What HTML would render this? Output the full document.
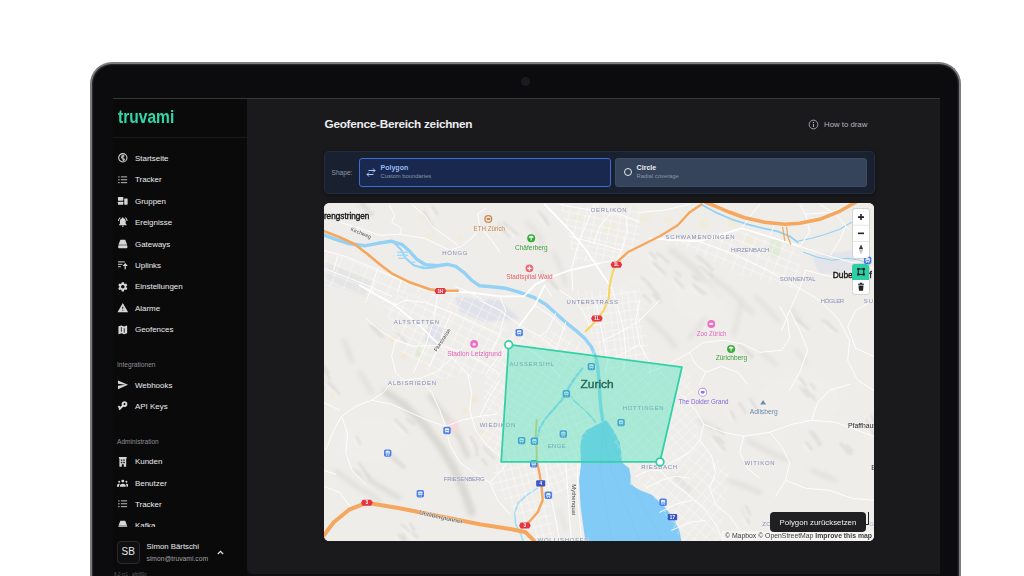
<!DOCTYPE html>
<html lang="de">
<head>
<meta charset="utf-8">
<title>Geofence-Bereich zeichnen</title>
<style>
*{box-sizing:border-box;margin:0;padding:0}
html,body{width:1024px;height:576px;overflow:hidden;background:#fff;font-family:"Liberation Sans",sans-serif;}
#laptop{position:absolute;left:90px;top:62px;width:871px;height:560px;border-radius:22px 22px 0 0;background:#0c0c0e;border:2px solid #7c7c80;border-bottom:none;box-shadow:inset 0 0 1.500px 1px #303033;}
#cam{position:absolute;left:521px;top:77px;width:9px;height:9px;border-radius:50%;background:#1b1b1f;}
#screen{position:absolute;left:113px;top:98px;width:827px;height:478px;background:#0e0e10;overflow:hidden;}
#side{position:absolute;left:0;top:0;width:134px;height:478px;background:#0a0a0b;}
#main{position:absolute;left:134px;top:0;width:693px;height:475.700px;background:#1a1a1d;border-radius:0 0 0 6px;}
.logo{position:absolute;left:4.5px;top:8.500px;font-weight:bold;font-size:17.600px;color:#2fd8a8;line-height:20px;transform:scaleX(.885);transform-origin:0 0;}
.sep{position:absolute;left:0;top:38.5px;width:134px;height:1px;background:#1a1a1c;}
.it{position:absolute;left:22px;font-size:7.950px;color:#ececee;white-space:nowrap;line-height:10px;height:10px;}
.ic{position:absolute;left:3.700px;width:11.600px;height:11.600px;fill:#d6d6d9;margin-top:-.800px}
.hd{position:absolute;left:4px;font-size:6.6px;color:#8e8e93;line-height:9px;height:9px;white-space:nowrap;}
.user{position:absolute;left:0;top:429.400px;width:134px;height:48.600px;background:#0a0a0b;}
.av{position:absolute;left:4px;top:13.900px;width:22.5px;height:22.5px;border-radius:4px;border:1px solid #2a2a2d;background:#101012;color:#e8e8ea;font-size:10px;line-height:20.500px;text-align:center;}
.un{position:absolute;left:33.500px;top:14.800px;font-size:7.8px;color:#ececee;line-height:10px;white-space:nowrap;}
.um{position:absolute;left:33.500px;top:26.600px;font-size:6.75px;color:#a0a0a6;line-height:9px;white-space:nowrap;}
.ver{position:absolute;left:1px;top:474px;font-size:4.5px;color:#56565b;line-height:5px;white-space:nowrap;}
h1{position:absolute;left:77.5px;top:18px;font-size:11.8px;letter-spacing:-.28px;font-weight:bold;color:#ededf0;line-height:16px;white-space:nowrap;}
.how{position:absolute;left:561px;top:20px;font-size:7.8px;color:#b4b4bb;line-height:10px;white-space:nowrap;}
.shape{position:absolute;left:77.300px;top:53px;width:550.500px;height:42.800px;border-radius:5px;background:#192030;border:1px solid #232d40;box-shadow:0 2px 5px rgba(0,0,0,.28);}
.shl{position:absolute;left:6.2px;top:15.7px;font-size:6.6px;color:#8f98a8;line-height:9px;}
.bt{position:absolute;top:6.200px;height:28.800px;border-radius:3px;}
.bt b{position:absolute;left:20.500px;top:3.600px;font-size:7.050px;line-height:9px;white-space:nowrap;}
.bt span{position:absolute;left:20.500px;top:13.300px;font-size:5.850px;line-height:8px;color:#8a94a8;white-space:nowrap;}
#bp{left:33.7px;width:252px;background:#19284f;border:1px solid #3b6fd4;}
#bp b{color:#93bdf5;}
#bc{left:289.800px;width:251.500px;background:#35445a;border:1px solid #3e4d64;}
#bc b{color:#e9edf3;}
#map{position:absolute;left:77.300px;top:104.700px;width:550.200px;height:338.600px;border-radius:5.500px;overflow:hidden;background:#efedea;}
#map svg{position:absolute;left:0;top:0;}
.ctl{position:absolute;left:528.600px;width:16px;background:#fff;border-radius:2.5px;box-shadow:0 0 0 1px rgba(0,0,0,.1);}
.tip{position:absolute;left:446px;top:309.500px;width:95.3px;height:19.700px;border-radius:4px;background:#202023;color:#f2f2f4;font-size:7.850px;line-height:21.500px;text-align:center;white-space:nowrap;z-index:3;}
.attr{position:absolute;right:0;bottom:0;height:10px;padding:0 2.500px 0 3px;background:rgba(255,255,255,.45);font-size:6.850px;line-height:10.200px;color:#3c3c3c;white-space:nowrap;}
</style>
</head>
<body>
<div id="laptop"></div>
<div id="cam"></div>
<div id="screen">
<div class="topline" style="position:absolute;left:0;top:0;width:827px;height:1px;background:#38383b;z-index:5"></div>
<div id="side">
<div class="logo">truvami</div>
<div class="sep"></div>
<svg class="ic" style="top:55.0px" viewBox="0 0 24 24"><circle cx="12" cy="12" r="8.600" fill="none" stroke="#d6d6d9" stroke-width="2.200"/><path d="M9.500 6.500l4.500-1 2 3.500-3 1.500 1 3 3 .5-1.500 4-3.500 1-1-4.500-3-2.500z" opacity=".85"/></svg>
<div class="it" style="top:55.9px">Startseite</div>
<svg class="ic" style="top:76.4px" viewBox="0 0 24 24"><circle cx="4" cy="6" r="1.400"/><circle cx="4" cy="12" r="1.400"/><circle cx="4" cy="18" r="1.400"/><rect x="8" y="5.100" width="13" height="1.800"/><rect x="8" y="11.100" width="13" height="1.800"/><rect x="8" y="17.100" width="13" height="1.800"/></svg>
<div class="it" style="top:77.3px">Tracker</div>
<svg class="ic" style="top:97.8px" viewBox="0 0 24 24"><rect x="2" y="4" width="11" height="8" rx="1"/><rect x="2" y="14" width="11" height="6" rx="1"/><rect x="15" y="7" width="7" height="13" rx="1"/></svg>
<div class="it" style="top:98.7px">Gruppen</div>
<svg class="ic" style="top:119.2px" viewBox="0 0 24 24"><path d="M12 2.500c-.83 0-1.500.67-1.500 1.500v.68C7.630 5.360 6 7.920 6 11v5l-2 2v1h16v-1l-2-2v-5c0-3.070-1.640-5.640-4.500-6.320V4c0-.83-.67-1.500-1.500-1.500zM10 20c0 1.100.9 2 2 2s2-.9 2-2h-4zM7.580 4.080L6.150 2.650C3.750 4.480 2.170 7.300 2.030 10.500h2c.15-2.650 1.510-4.970 3.550-6.420zM19.970 10.500h2c-.15-3.200-1.730-6.020-4.120-7.850l-1.420 1.430c2.020 1.450 3.390 3.770 3.540 6.420z"/></svg>
<div class="it" style="top:120.1px">Ereignisse</div>
<svg class="ic" style="top:140.6px" viewBox="0 0 24 24"><path d="M7 3.500h10l4 10.500H3z"/><rect x="2.500" y="15.200" width="19" height="5.800" rx="1.400"/></svg>
<div class="it" style="top:141.5px">Gateways</div>
<svg class="ic" style="top:162.0px" viewBox="0 0 24 24"><rect x="2" y="5" width="14" height="2"/><rect x="2" y="10" width="9" height="2"/><rect x="2" y="15" width="6" height="2"/><path d="M17 8.500l5.500 5.800h-4.200v6.700h-2.600v-6.700h-4.200z"/></svg>
<div class="it" style="top:162.9px">Uplinks</div>
<svg class="ic" style="top:183.4px" viewBox="0 0 24 24"><path d="M19.140 12.940c.04-.3.060-.61.060-.940 0-.32-.020-.64-.070-.940l2.030-1.580c.18-.14.230-.41.120-.61l-1.920-3.320c-.12-.22-.37-.29-.59-.22l-2.390.96c-.5-.38-1.030-.7-1.620-.94l-.36-2.540c-.04-.24-.24-.41-.48-.41h-3.840c-.24 0-.43.170-.47.410l-.36 2.540c-.59.240-1.130.57-1.620.94l-2.390-.96c-.22-.08-.47 0-.59.220L2.740 8.870c-.12.210-.08.470.12.610l2.030 1.580c-.05.300-.09.630-.09.940s.02.640.07.940l-2.030 1.580c-.18.140-.23.410-.12.610l1.920 3.320c.12.220.37.290.59.220l2.390-.96c.5.380 1.030.7 1.620.94l.36 2.540c.05.240.24.410.48.410h3.840c.24 0 .44-.17.470-.41l.36-2.540c.59-.24 1.130-.56 1.620-.94l2.390.96c.22.080.47 0 .59-.22l1.920-3.320c.12-.22.070-.47-.12-.61l-2.010-1.580zM12 15.600c-1.980 0-3.600-1.620-3.600-3.600s1.620-3.600 3.600-3.600 3.600 1.620 3.600 3.600-1.620 3.600-3.600 3.600z"/></svg>
<div class="it" style="top:184.3px">Einstellungen</div>
<svg class="ic" style="top:204.8px" viewBox="0 0 24 24"><path fill-rule="evenodd" d="M1 21h22L12 2 1 21zm12-3h-2v-2h2v2zm0-4h-2v-4h2v4z"/></svg>
<div class="it" style="top:205.7px">Alarme</div>
<svg class="ic" style="top:226.3px" viewBox="0 0 24 24"><path d="M20.500 3l-.16.030L15 5.100 9 3 3.360 4.900c-.21.070-.36.250-.36.480V20.500c0 .28.220.5.500.5l.16-.03L9 18.900l6 2.100 5.640-1.900c.21-.07.360-.25.360-.48V3.500c0-.28-.22-.5-.5-.5z"/><path d="M9 6.500v9.500M15 8.500v9.500" stroke="#0a0a0b" stroke-width="1.600" fill="none"/></svg>
<div class="it" style="top:227.2px">Geofences</div>
<svg class="ic" style="top:281.7px" viewBox="0 0 24 24"><path d="M2.010 21L23 12 2.010 3 2 10l15 2-15 2z"/></svg>
<div class="it" style="top:282.6px">Webhooks</div>
<svg class="ic" style="top:303.0px" viewBox="0 0 24 24"><g transform="rotate(135 12 12)"><path fill-rule="evenodd" d="M12.650 10C11.830 7.670 9.610 6 7 6c-3.310 0-6 2.690-6 6s2.690 6 6 6c2.610 0 4.830-1.670 5.650-4H17v4h4v-4h2v-4H12.650zM7 14c-1.100 0-2-.9-2-2s.9-2 2-2 2 .9 2 2-.9 2-2 2z"/></g></svg>
<div class="it" style="top:303.9px">API Keys</div>
<svg class="ic" style="top:358.4px" viewBox="0 0 24 24"><path fill-rule="evenodd" d="M4 2h16v3h-1v17h-5v-5h-4v5H5V5H4zM8 7v3h3V7zm5 0v3h3V7zM8 12v3h3v-3zm5 0v3h3v-3z"/></svg>
<div class="it" style="top:359.3px">Kunden</div>
<svg class="ic" style="top:379.8px" viewBox="0 0 24 24"><circle cx="12" cy="8.500" r="3"/><path d="M6 18.500c0-3 3-4.500 6-4.500s6 1.500 6 4.500V20H6z"/><circle cx="4.500" cy="10" r="2"/><circle cx="19.500" cy="10" r="2"/><path d="M0 18c0-2.500 2-3.800 4.500-3.800.5 0 1 .05 1.400.15C4.700 15.400 4.200 16.800 4.200 18.500V20H0zM24 18c0-2.500-2-3.800-4.500-3.800-.5 0-1 .05-1.400.15 1.200 1.050 1.700 2.450 1.700 4.150V20H24z"/></svg>
<div class="it" style="top:380.7px">Benutzer</div>
<svg class="ic" style="top:401.2px" viewBox="0 0 24 24"><circle cx="4" cy="6" r="1.400"/><circle cx="4" cy="12" r="1.400"/><circle cx="4" cy="18" r="1.400"/><rect x="8" y="5.100" width="13" height="1.800"/><rect x="8" y="11.100" width="13" height="1.800"/><rect x="8" y="17.100" width="13" height="1.800"/></svg>
<div class="it" style="top:402.1px">Tracker</div>
<svg class="ic" style="top:422.2px" viewBox="0 0 24 24"><path d="M7 3.500h10l4 10.500H3z"/><rect x="2.500" y="15.200" width="19" height="5.800" rx="1.400"/></svg>
<div class="it" style="top:423.1px">Kafka</div>
<div class="hd" style="top:261.9px">Integrationen</div>
<div class="hd" style="top:338.5px">Administration</div>
<div class="user"><div class="av">SB</div><div class="un">Simon Bärtschi</div><div class="um">simon@truvami.com</div>
<svg style="position:absolute;left:103px;top:20.600px;width:9px;height:9px" viewBox="0 0 24 24"><path d="M5 16l7-7 7 7" fill="none" stroke="#e4e4e6" stroke-width="3.200"/></svg></div>
<div class="ver">8.2-rc1 · afbf89c</div>
</div>
<div id="main">
 <h1>Geofence-Bereich zeichnen</h1>
 <svg style="position:absolute;left:560.5px;top:20.500px;width:11px;height:11px" viewBox="0 0 24 24"><circle cx="12" cy="12" r="9.500" fill="none" stroke="#b4b4bb" stroke-width="1.800"/><rect x="11" y="10.500" width="2" height="7" fill="#b4b4bb"/><circle cx="12" cy="7.500" r="1.300" fill="#b4b4bb"/></svg>
 <div class="how" style="left:577px;top:21.600px">How to draw</div>
 <div class="shape">
  <div class="shl">Shape:</div>
  <div class="bt" id="bp">
   <svg style="position:absolute;left:6.500px;top:7.500px;width:10px;height:11px" viewBox="0 0 20 22"><path d="M5 7h13M14 3l4 4-4 4M15 15H2M6 11l-4 4 4 4" fill="none" stroke="#a9c8f5" stroke-width="2"/></svg>
   <b>Polygon</b><span>Custom boundaries</span>
  </div>
  <div class="bt" id="bc">
   <svg style="position:absolute;left:6.500px;top:8.300px;width:10px;height:10px" viewBox="0 0 20 20"><circle cx="10" cy="10" r="7" fill="none" stroke="#e4e8ee" stroke-width="2"/></svg>
   <b>Circle</b><span>Radial coverage</span>
  </div>
 </div>
 <div id="map">
<svg width="550.200" height="338.600" viewBox="324.300 202.700 550.200 338.600" font-family="Liberation Sans, sans-serif">
<defs>
 <filter id="bl" x="-20%" y="-20%" width="140%" height="140%"><feGaussianBlur stdDeviation="2.200"/></filter>
 <filter id="bl2" x="-20%" y="-20%" width="140%" height="140%"><feGaussianBlur stdDeviation="1.200"/></filter>
 </defs>
<rect x="323" y="202" width="553" height="342" fill="#efedea"/>
<!-- hillshade -->
<g filter="url(#bl)" fill="none" stroke="#d2d0ca" stroke-linecap="round" opacity=".42">
 <path d="M344 340 L352 360 M360 372 L372 392 M336 470 L356 486 L380 500" stroke-width="5"/>
 <path d="M672 250 L690 264 L706 282 L720 296" stroke-width="6"/>
 <path d="M700 268 L730 290 L752 312" stroke-width="5"/>
 <path d="M742 298 L738 320 L734 334" stroke-width="4"/>
 <path d="M756 296 L772 312 L780 322" stroke-width="4"/>
 <path d="M792 308 L800 322 M762 352 L776 364 M796 350 L806 362" stroke-width="4"/>
 <path d="M648 318 L664 332 L676 346" stroke-width="5"/>
 <path d="M690 338 L700 326 L706 316" stroke-width="4"/>
 <path d="M528 222 L540 236 L546 252 M554 252 L562 270 L566 284" stroke-width="4"/>
 <path d="M700 420 L720 432 M748 440 L770 452 L788 460 M812 470 L836 480 M730 480 L760 492 M676 476 L690 490" stroke-width="5"/>
 <path d="M560 510 L566 530" stroke-width="3"/>
</g>
<g filter="url(#bl)" fill="#f1f0ed" opacity=".6">
 <ellipse cx="372" cy="440" rx="30" ry="22"/><ellipse cx="700" cy="300" rx="26" ry="18"/><ellipse cx="800" cy="400" rx="40" ry="24"/><ellipse cx="640" cy="290" rx="20" ry="14"/>
</g>
<g filter="url(#bl)" fill="none" stroke="#d3d1ca" stroke-linecap="round" opacity=".75"><path d="M386 392 L404 404 L424 424 L442 448 L454 468 L464 490 L472 512" stroke-width="8"/><path d="M430 396 L446 416 L460 438 L468 456" stroke-width="5"/><path d="M356 470 L380 486 L400 498" stroke-width="4"/></g>
<!-- fine hillshade -->
<g filter="url(#bl2)" fill="none" stroke-linecap="round"><path stroke="#d4d2cc" stroke-width="2.800" opacity=".5" d="M731.4 411.0 L734.9 418.6 M739.6 403.1 L746.2 412.4 M750.6 398.8 L757.4 410.0 M810.7 431.3 L820.1 445.0 M806.6 442.6 L812.0 448.9 M812.3 432.0 L820.8 443.0 M813.9 432.4 L818.7 440.0 M676.2 271.4 L680.7 275.4 M641.9 277.2 L650.2 284.0 M823.2 320.5 L837.0 330.6 M826.6 321.2 L835.0 329.6 M796.9 318.8 L808.4 328.7 M867.3 419.9 L874.3 434.6 M872.1 416.0 L875.8 424.3 M705.1 262.2 L712.6 269.4 M695.4 257.4 L701.3 262.3 M703.1 266.6 L712.4 276.2 M698.1 255.7 L708.9 264.9 M657.8 253.3 L669.1 262.3 M650.8 252.8 L656.5 258.6 M653.8 262.3 L665.5 273.6 M660.1 254.7 L665.0 258.6 M654.6 293.8 L659.8 299.5 M647.7 282.1 L658.9 295.3 M644.0 295.0 L651.4 301.4 M652.9 295.1 L660.1 301.6 M739.3 344.7 L753.1 355.6 M738.3 348.3 L749.1 360.4 M739.9 349.5 L750.7 358.3 M746.3 353.0 L752.2 357.4 M811.2 383.9 L815.2 388.9 M800.8 386.5 L808.2 396.0 M800.2 377.7 L806.0 385.4 M805.9 388.5 L815.0 399.1 M717.5 428.3 L723.9 433.7 M718.2 437.3 L723.9 442.4 M713.5 436.0 L725.1 449.5 M742.9 508.8 L747.2 517.6 M746.7 517.0 L749.5 522.7 M746.2 505.9 L750.6 514.5 M693.8 284.7 L702.8 293.2 M693.6 284.1 L706.2 293.7 M693.5 276.1 L698.6 280.0 M675.4 278.0 L683.3 287.0 M847.0 444.9 L852.4 450.2 M841.2 443.5 L849.2 453.5 M841.5 445.0 L852.1 453.9 M482.6 458.8 L486.9 464.4 M484.5 446.9 L494.3 457.8 M323.8 377.3 L335.4 387.9 M328.6 382.7 L339.8 393.4 M315.2 374.9 L325.0 387.6 M406.4 526.6 L418.1 537.5 M402.1 524.2 L408.6 530.6 M375.6 327.0 L383.3 336.8 M398.0 332.5 L405.8 341.9 M371.1 325.8 L381.2 335.9 M403.3 534.1 L407.3 543.4 M410.7 523.4 L414.5 529.6 M399.1 534.4 L409.7 548.5 M319.2 360.6 L328.7 371.9 M322.7 368.1 L329.9 378.2 M407.3 418.3 L414.1 423.8 M395.8 419.5 L407.7 431.7 M359.6 463.2 L369.4 476.6 M357.2 436.7 L360.2 443.2 M390.8 457.4 L403.2 467.2 M392.4 453.9 L405.0 466.8 M474.3 447.5 L477.8 455.2 M474.8 443.3 L477.5 449.5 M471.0 436.6 L476.8 446.7 M539.9 212.0 L548.7 224.1 M543.9 215.6 L546.8 221.0 M541.7 271.8 L549.8 282.0 M544.3 276.7 L554.2 287.9 M550.2 278.6 L557.9 288.4 M499.3 223.1 L509.5 236.2 M504.1 222.5 L517.4 234.0 M499.3 226.6 L504.2 231.4 M361.6 204.7 L372.1 215.2 M357.8 206.5 L365.5 213.6 M361.2 198.6 L368.0 208.7 M361.4 203.0 L373.1 213.5 M424.5 211.4 L432.4 225.7 M432.6 205.8 L437.5 213.9"/><path stroke="#f6f5f2" stroke-width="2.400" opacity=".6" d="M728.6 413.2 L732.1 420.8 M747.8 401.0 L754.6 412.2 M803.8 444.8 L809.2 451.1 M823.8 323.4 L832.2 331.8 M794.1 321.0 L805.6 330.9 M864.5 422.1 L871.5 436.8 M869.3 418.2 L873.0 426.5 M702.3 264.4 L709.8 271.6 M700.3 268.8 L709.6 278.4 M695.3 257.9 L706.1 267.1 M648.0 255.0 L653.7 260.8 M651.0 264.5 L662.7 275.8 M657.3 256.9 L662.2 260.8 M651.8 296.0 L657.0 301.7 M650.1 297.3 L657.3 303.8 M736.5 346.9 L750.3 357.8 M735.5 350.5 L746.3 362.6 M737.1 351.7 L747.9 360.5 M743.5 355.2 L749.4 359.6 M808.4 386.1 L812.4 391.1 M797.4 379.9 L803.2 387.6 M714.7 430.5 L721.1 435.9 M710.7 438.2 L722.3 451.7 M743.9 519.2 L746.7 524.9 M743.4 508.1 L747.8 516.7 M691.0 286.9 L700.0 295.4 M672.6 280.2 L680.5 289.2 M325.8 384.9 L337.0 395.6 M403.6 528.8 L415.3 539.7 M407.9 525.6 L411.7 531.8 M396.3 536.6 L406.9 550.7 M319.9 370.3 L327.1 380.4 M393.0 421.7 L404.9 433.9 M356.8 465.4 L366.6 478.8 M354.4 438.9 L357.4 445.4 M472.0 445.5 L474.7 451.7 M468.2 438.8 L474.0 448.9 M537.1 214.2 L545.9 226.3 M547.4 280.8 L555.1 290.6 M501.3 224.7 L514.6 236.2 M496.5 228.8 L501.4 233.6 M358.8 206.9 L369.3 217.4 M355.0 208.7 L362.7 215.8 M429.8 208.0 L434.7 216.1"/></g>
<!-- landuse -->
<g filter="url(#bl2)">
 <path d="M455 296 L500 300 L520 318 L486 322 L460 312z" fill="#e0e1e9"/>
 <path d="M430 322 L446 330 L438 346 L424 340z" fill="#e0e1e9"/>
 <path d="M328 262 L372 280 L366 296 L326 282z" fill="#e6e5e6"/>
 <path d="M812 256 L852 250 L856 270 L820 274z" fill="#e3e4ea"/>
 <rect x="770" y="240" width="11" height="16" fill="#e2ead8"/>
 <rect x="728" y="216" width="10" height="12" fill="#f0ecdc"/><rect x="700" y="218" width="8" height="10" fill="#f0ecdc"/>
 <rect x="664" y="216" width="9" height="7" fill="#f0ecdc"/><rect x="746" y="234" width="8" height="9" fill="#f0ecdc"/>
 <rect x="574" y="214" width="8" height="6" fill="#f0ecdc"/><rect x="606" y="224" width="8" height="7" fill="#f0ecdc"/>
 <rect x="418" y="216" width="7" height="5" fill="#f0ecdc"/><rect x="426" y="232" width="9" height="5" fill="#f0ecdc"/><rect x="456" y="236" width="7" height="4" fill="#f0ecdc"/>
 <rect x="390" y="336" width="7" height="5" fill="#f1e8d8"/><rect x="402" y="352" width="5" height="7" fill="#f1e8d8"/><rect x="420" y="358" width="5" height="5" fill="#f1e8d8"/>
 <rect x="416" y="346" width="5" height="10" fill="#dfe9d2"/>
 <rect x="447" y="420" width="12" height="12" fill="#f3dcdc"/>
 <rect x="470" y="396" width="8" height="6" fill="#f1e8d8"/><rect x="478" y="430" width="7" height="6" fill="#f1e8d8"/><rect x="462" y="408" width="6" height="5" fill="#f1e8d8"/>
 <rect x="330" y="392" width="6" height="5" fill="#f0ecdc"/>
 <rect x="640" y="214" width="10" height="8" fill="#efebde"/>
</g>
<!-- water -->
<g fill="none" stroke="#93d2f5" stroke-linecap="round" stroke-linejoin="round">
 <path d="M322 234 L336 239 L350 243.500 L365 245.500 L378 243 L392 241 L402 244 L410 251 L417 259 L426 264.500 L438 265.500 L448 264 L456 266 L464 272 L472 280 L480 285.500 L492 286.500 L506 288 L520 292 L534 297 L546 304 L556 313 L566 322 L576 330 L585 338 L592 347 L596 357 L598 366 L599 378 L600 392 L601 406 L603 420" stroke-width="3.400"/>
 <path d="M394 242 L401 249 L406 258 L414 265 L424 268 L436 267" stroke-width="2"/>
 <path d="M583 368 L575 378 L568 389 L562 400 L553 410 L545 419 L540 428 L537 440" stroke-width="2.200"/>
 <path d="M568 392 L574 400 L582 407 L590 415 L596 422" stroke-width="1.400"/>
 <path d="M538 488 L528 494 L519 502 L515 512 L516 524 L521 534 L524 542" stroke-width="1.600" stroke="#a5dcf5"/>
 <path d="M703 205 L716 212 L732 219 L748 224 L764 228 L778 231 L790 236 L798 242" stroke-width="1.800"/>
 <path d="M798 241 L812 238 L826 234 L840 229 L852 222" stroke-width="1.100"/>
 <path d="M804 252 L818 257 L832 260 L848 258 L860 260 L870 264" stroke-width="1.100"/>
 <path d="M398 252 h10 M398 255 h10 M399 258 h8 M412 262 h3 M421 266 h3" stroke-width="1.600" stroke="#a5dcf5"/>
</g>
<path d="M597 424.500 L606.500 420 L610 424.500 L614.500 431.500 L620 442 L621.500 452 L622 462 L629.500 468 L631 476 L630.500 484 L640.200 490 L652 494.500 L664.500 506 L674.500 519 L680 531 L682 543 L586 543 L584.300 531 L581 507 L579.400 480 L581.400 463 L580.500 448.600 L581.500 437 L586 430.500z" fill="#82cbf7"/>
<g fill="none" stroke="#79c3ee" stroke-width=".5" opacity=".8"><path d="M602 424 L612 470 L640 540M604 424 L600 470 L612 540M606 426 L630 480 L662 540"/></g>
<!-- street grids -->
<defs>
<clipPath id="cpA"><path d="M486 372 L510 338 L560 330 L596 352 L598 368 L583 370 L540 428 L500 456 L480 440 z"/></clipPath>
<clipPath id="cpB"><path d="M540 428 L583 372 L598 420 L582 440 L580 480 L548 500 L536 462 z"/></clipPath>
<clipPath id="cpC"><path d="M606 372 L660 360 L690 372 L700 440 L672 470 L636 474 L620 458 L612 430 z"/></clipPath>
<clipPath id="cpD"><path d="M575 290 L640 290 L650 360 L606 372 L596 345 z"/></clipPath>
<clipPath id="cpE"><path d="M560 204 L640 204 L640 250 L615 262 L575 262 z"/></clipPath>
<clipPath id="cpF"><path d="M380 296 L440 292 L500 300 L510 340 L486 372 L440 380 L400 350 z"/></clipPath>
<clipPath id="cpG"><path d="M650 238 L740 230 L800 250 L800 290 L740 275 L690 250 z"/></clipPath>
<clipPath id="cpH"><path d="M324 250 L437 291 L380 296 L324 285 z"/></clipPath>
<clipPath id="cpI"><path d="M636 476 L672 470 L700 440 L730 470 L720 541 L682 541 L660 505 z"/></clipPath>
<clipPath id="cpJ"><path d="M500 456 L540 428 L536 462 L548 500 L556 541 L524 541 L515 512 L490 482 z"/></clipPath>
</defs>
<g fill="none" stroke="#fcfcfb" stroke-width=".700" opacity=".85">
<path clip-path="url(#cpA)" d="M512.3 269.0 L662.1 362.6 M508.5 275.1 L658.3 368.7 M505.6 279.8 L655.4 373.4 M501.8 285.9 L651.6 379.5 M498.9 290.5 L648.7 384.1 M495.1 296.6 L644.9 390.2 M491.3 302.7 L641.1 396.3 M488.4 307.3 L638.2 400.9 M484.6 313.4 L634.4 407.0 M481.7 318.0 L631.5 411.6 M477.9 324.2 L627.7 417.7 M474.1 330.3 L623.9 423.9 M471.2 334.9 L621.0 428.5 M467.4 341.0 L617.2 434.6 M464.5 345.6 L614.3 439.2 M460.7 351.7 L610.4 445.3 M456.8 357.8 L606.6 451.4 M454.0 362.4 L603.7 456.0 M450.1 368.5 L599.9 462.1 M447.3 373.2 L597.0 466.8 M443.4 379.3 L593.2 472.9 M439.6 385.4 L589.4 479.0 M436.7 390.0 L586.5 483.6 M432.9 396.1 L582.7 489.7 M430.0 400.7 L579.8 494.3 M426.2 406.8 L576.0 500.4 M422.4 412.9 L572.2 506.5 M419.5 417.6 L569.3 511.2 M415.7 423.7 L565.5 517.3 M413.2 418.5 L506.8 268.7 M419.5 422.5 L513.1 272.7 M427.3 427.4 L520.9 277.6 M435.1 432.2 L528.7 282.4 M441.4 436.2 L535.0 286.4 M449.2 441.1 L542.8 291.3 M455.6 445.0 L549.2 295.2 M463.4 449.9 L557.0 300.1 M471.2 454.8 L564.8 305.0 M477.5 458.7 L571.1 308.9 M485.3 463.6 L578.9 313.8 M491.6 467.5 L585.2 317.7 M499.4 472.4 L593.0 322.6 M507.2 477.3 L600.8 327.5 M513.5 481.2 L607.1 331.4 M521.3 486.1 L614.9 336.3 M527.6 490.0 L621.2 340.3 M535.5 494.9 L629.0 345.1 M543.3 499.8 L636.9 350.0 M549.6 503.7 L643.2 354.0 M557.4 508.6 L651.0 358.8 M563.7 512.6 L657.3 362.8 M571.5 517.4 L665.1 367.7"/>
<path clip-path="url(#cpB)" d="M612.3 338.9 L667.0 474.4 M605.6 341.6 L660.4 477.1 M600.5 343.6 L655.3 479.2 M593.9 346.3 L648.6 481.9 M587.2 349.0 L642.0 484.6 M582.1 351.0 L636.9 486.6 M575.4 353.7 L630.2 489.3 M570.4 355.8 L625.2 491.4 M563.7 358.5 L618.5 494.0 M557.0 361.2 L611.8 496.7 M552.0 363.2 L606.8 498.8 M545.3 365.9 L600.1 501.5 M540.3 367.9 L595.0 503.5 M533.6 370.6 L588.4 506.2 M526.9 373.3 L581.7 508.9 M521.9 375.4 L576.6 511.0 M515.2 378.1 L570.0 513.7 M510.1 380.1 L564.9 515.7 M503.5 382.8 L558.2 518.4 M496.8 385.5 L551.6 521.1 M491.7 387.6 L546.5 523.1 M485.0 390.3 L539.8 525.8 M480.0 392.3 L534.8 527.9 M473.3 395.0 L528.1 530.6 M466.6 397.7 L521.4 533.3 M469.0 388.6 L604.6 333.8 M472.2 396.6 L607.8 341.9 M475.5 404.7 L611.1 349.9 M478.1 411.1 L613.7 356.4 M481.4 419.2 L616.9 364.4 M484.0 425.7 L619.5 370.9 M487.2 433.7 L622.8 378.9 M490.5 441.8 L626.1 387.0 M493.1 448.2 L628.7 393.5 M496.3 456.3 L631.9 401.5 M498.9 462.7 L634.5 408.0 M502.2 470.8 L637.8 416.0 M505.5 478.9 L641.0 424.1 M508.1 485.3 L643.6 430.5 M511.3 493.4 L646.9 438.6 M513.9 499.8 L649.5 445.0 M517.2 507.9 L652.8 453.1 M520.5 516.0 L656.0 461.2 M523.1 522.4 L658.6 467.6 M526.3 530.5 L661.9 475.7 M528.9 536.9 L664.5 482.1"/>
<path clip-path="url(#cpC)" d="M545.3 410.8 L658.1 309.3 M549.3 415.2 L662.1 313.7 M554.5 421.0 L667.2 319.4 M559.6 426.7 L672.4 325.1 M563.6 431.1 L676.4 329.6 M568.7 436.8 L681.5 335.3 M572.7 441.2 L685.5 339.7 M577.9 447.0 L690.7 345.4 M583.0 452.7 L695.8 351.1 M587.0 457.1 L699.8 355.6 M592.2 462.8 L704.9 361.3 M596.1 467.3 L708.9 365.7 M601.3 473.0 L714.1 371.4 M606.4 478.7 L719.2 377.2 M610.4 483.1 L723.2 381.6 M615.6 488.8 L728.4 387.3 M619.6 493.3 L732.3 391.7 M624.7 499.0 L737.5 397.4 M629.9 504.7 L742.6 403.2 M633.8 509.1 L746.6 407.6 M639.0 514.9 L751.8 413.3 M643.0 519.3 L755.8 417.7 M648.1 525.0 L760.9 423.4 M662.4 306.4 L764.0 419.2 M655.2 312.9 L756.8 425.7 M649.3 318.2 L750.9 431.0 M642.1 324.7 L743.6 437.5 M636.2 330.0 L737.7 442.8 M629.0 336.5 L730.5 449.3 M621.8 343.0 L723.3 455.8 M615.9 348.3 L717.4 461.1 M608.7 354.8 L710.2 467.6 M602.7 360.1 L704.3 472.9 M595.5 366.6 L697.1 479.4 M588.3 373.1 L689.9 485.9 M582.4 378.4 L684.0 491.2 M575.2 384.9 L676.8 497.7 M569.3 390.3 L670.9 503.0 M562.1 396.7 L663.6 509.5 M554.9 403.2 L656.4 516.0 M549.0 408.6 L650.5 521.3 M541.8 415.0 L643.3 527.8"/>
<path clip-path="url(#cpD)" d="M666.9 265.2 L682.9 379.2 M659.3 266.3 L675.3 380.3 M653.4 267.1 L669.4 381.1 M645.7 268.2 L661.8 382.2 M639.8 269.0 L655.9 383.0 M632.2 270.1 L648.2 384.1 M624.6 271.2 L640.6 385.2 M618.7 272.0 L634.7 386.0 M611.1 273.1 L627.1 387.1 M605.2 273.9 L621.2 387.9 M597.6 275.0 L613.6 389.0 M589.9 276.0 L606.0 390.0 M584.0 276.9 L600.1 390.9 M576.4 277.9 L592.4 391.9 M570.5 278.8 L586.5 392.8 M562.9 279.8 L578.9 393.8 M555.3 280.9 L571.3 394.9 M549.4 281.7 L565.4 395.7 M541.8 282.8 L557.8 396.8 M546.7 276.3 L660.7 260.3 M548.0 285.9 L662.0 269.9 M549.1 293.8 L663.1 277.7 M550.5 303.4 L664.5 287.3 M551.8 313.0 L665.8 296.9 M552.9 320.8 L666.9 304.8 M554.3 330.4 L668.3 314.4 M555.4 338.3 L669.4 322.3 M556.7 347.9 L670.8 331.9 M558.1 357.5 L672.1 341.5 M559.2 365.4 L673.2 349.4 M560.6 375.0 L674.6 359.0 M561.7 382.9 L675.7 366.9 M563.0 392.5 L677.0 376.5 M564.4 402.1 L678.4 386.1"/>
<path clip-path="url(#cpE)" d="M561.2 168.2 L661.8 189.6 M560.0 174.0 L660.5 195.4 M558.4 181.6 L658.9 202.9 M557.1 187.4 L657.7 208.8 M555.5 194.9 L656.1 216.3 M553.9 202.5 L654.5 223.8 M552.7 208.3 L653.3 229.7 M551.1 215.8 L651.7 237.2 M549.9 221.6 L650.4 243.0 M548.3 229.2 L648.8 250.5 M546.7 236.7 L647.2 258.1 M545.4 242.5 L646.0 263.9 M543.8 250.0 L644.4 271.4 M542.6 255.9 L643.2 277.2 M541.0 263.4 L641.6 284.8 M539.4 270.9 L639.9 292.3 M538.1 276.7 L638.7 298.1 M669.2 195.2 L647.9 295.7 M660.2 193.2 L638.9 293.8 M652.9 191.7 L631.6 292.3 M643.9 189.8 L622.6 290.4 M634.9 187.9 L613.6 288.4 M627.7 186.3 L606.3 286.9 M618.7 184.4 L597.3 285.0 M611.4 182.9 L590.0 283.4 M602.4 180.9 L581.0 281.5 M593.4 179.0 L572.0 279.6 M586.1 177.5 L564.7 278.1 M577.1 175.6 L555.7 276.1 M569.8 174.0 L548.4 274.6 M560.8 172.1 L539.4 272.7 M551.8 170.2 L530.4 270.8"/>
<path clip-path="url(#cpF)" d="M411.1 221.9 L555.8 292.5 M408.0 228.2 L552.7 298.8 M404.2 236.0 L548.9 306.6 M400.4 243.8 L545.1 314.4 M397.4 250.1 L542.0 320.6 M393.5 257.9 L538.2 328.5 M390.5 264.1 L535.2 334.7 M386.7 272.0 L531.4 342.5 M382.9 279.8 L527.6 350.3 M379.8 286.0 L524.5 356.6 M376.0 293.8 L520.7 364.4 M373.0 300.1 L517.7 370.7 M369.1 307.9 L513.8 378.5 M365.3 315.7 L510.0 386.3 M362.3 322.0 L507.0 392.5 M358.5 329.8 L503.2 400.4 M355.4 336.0 L500.1 406.6 M351.6 343.9 L496.3 414.4 M347.8 351.7 L492.5 422.2 M344.8 357.9 L489.4 428.5 M340.9 365.7 L485.6 436.3 M337.9 372.0 L482.6 442.6 M334.1 379.8 L478.8 450.4 M328.8 368.9 L399.4 224.2 M338.4 373.6 L409.0 228.9 M346.5 377.5 L417.1 232.8 M356.1 382.2 L426.7 237.5 M364.1 386.1 L434.7 241.4 M373.8 390.8 L444.3 246.1 M383.4 395.5 L454.0 250.8 M391.4 399.4 L462.0 254.7 M401.0 404.1 L471.6 259.4 M409.1 408.0 L479.7 263.3 M418.7 412.7 L489.3 268.0 M428.3 417.4 L498.9 272.7 M436.4 421.3 L506.9 276.7 M446.0 426.0 L516.6 281.3 M454.0 430.0 L524.6 285.3 M463.6 434.6 L534.2 290.0 M473.3 439.3 L543.8 294.6 M481.3 443.3 L551.9 298.6 M490.9 448.0 L561.5 303.3"/>
<path clip-path="url(#cpG)" d="M681.1 147.7 L834.6 209.7 M678.5 154.2 L832.0 216.2 M675.2 162.2 L828.7 224.3 M672.0 170.3 L825.5 232.3 M669.4 176.7 L822.9 238.8 M666.1 184.8 L819.6 246.8 M663.5 191.3 L817.0 253.3 M660.2 199.3 L813.7 261.3 M657.0 207.4 L810.5 269.4 M654.4 213.8 L807.9 275.8 M651.1 221.9 L804.6 283.9 M648.5 228.3 L802.0 290.4 M645.3 236.4 L798.8 298.4 M642.0 244.5 L795.5 306.5 M639.4 250.9 L792.9 312.9 M636.1 259.0 L789.6 321.0 M633.5 265.4 L787.0 327.4 M630.3 273.5 L783.8 335.5 M627.0 281.6 L780.5 343.6 M624.4 288.0 L777.9 350.0 M621.1 296.1 L774.6 358.1 M618.5 302.5 L772.0 364.5 M615.3 310.6 L768.8 372.6 M610.5 303.0 L672.6 149.5 M620.5 307.0 L682.5 153.5 M628.8 310.4 L690.8 156.9 M638.7 314.4 L700.7 160.9 M647.0 317.8 L709.0 164.3 M656.9 321.8 L718.9 168.3 M666.8 325.8 L728.8 172.3 M675.1 329.1 L737.1 175.6 M685.0 333.1 L747.1 179.6 M693.3 336.5 L755.4 183.0 M703.3 340.5 L765.3 187.0 M713.2 344.5 L775.2 191.0 M721.5 347.9 L783.5 194.4 M731.4 351.9 L793.4 198.4 M739.7 355.2 L801.7 201.7 M749.6 359.2 L811.6 205.7 M759.5 363.2 L821.6 209.7 M767.8 366.6 L829.9 213.1 M777.8 370.6 L839.8 217.1"/>
<path clip-path="url(#cpH)" d="M348.8 183.3 L465.6 230.5 M345.8 190.7 L462.6 237.9 M342.2 199.7 L459.0 246.9 M339.2 207.0 L456.0 254.2 M335.6 216.0 L452.4 263.2 M331.9 225.0 L448.8 272.2 M329.0 232.4 L445.8 279.6 M325.3 241.4 L442.2 288.6 M322.3 248.7 L439.2 296.0 M318.7 257.7 L435.5 304.9 M315.1 266.7 L431.9 313.9 M312.1 274.1 L428.9 321.3 M308.5 283.1 L425.3 330.3 M305.5 290.5 L422.3 337.7 M301.9 299.5 L418.7 346.7 M298.2 308.5 L415.1 355.7 M295.2 315.8 L412.1 363.0 M291.3 304.9 L338.5 188.1 M305.0 310.4 L352.2 193.6 M318.6 315.9 L365.8 199.1 M330.6 320.8 L377.8 204.0 M344.2 326.3 L391.4 209.5 M356.2 331.2 L403.5 214.3 M369.9 336.7 L417.1 219.8 M383.5 342.2 L430.7 225.3 M395.5 347.0 L442.7 230.2 M409.1 352.5 L456.3 235.7 M421.2 357.4 L468.4 240.5"/>
<path clip-path="url(#cpI)" d="M582.2 498.6 L673.5 389.8 M588.9 504.2 L680.1 395.4 M594.2 508.7 L685.5 399.9 M600.9 514.3 L692.1 405.5 M606.2 518.7 L697.5 410.0 M612.9 524.3 L704.1 415.6 M619.5 529.9 L710.8 421.1 M624.8 534.4 L716.1 425.6 M631.5 540.0 L722.8 431.2 M636.8 544.4 L728.1 435.7 M643.5 550.0 L734.8 441.3 M650.2 555.6 L741.4 446.9 M655.5 560.1 L746.7 451.3 M662.2 565.7 L753.4 456.9 M667.5 570.1 L758.7 461.4 M674.1 575.7 L765.4 467.0 M680.8 581.3 L772.1 472.6 M686.1 585.8 L777.4 477.0 M692.8 591.4 L784.1 482.6 M679.6 384.1 L788.4 475.4 M673.8 391.0 L782.6 482.2 M667.0 399.2 L775.7 490.4 M661.2 406.0 L770.0 497.3 M654.3 414.2 L763.1 505.5 M647.5 422.4 L756.2 513.7 M641.7 429.3 L750.5 520.5 M634.8 437.5 L743.6 528.7 M629.1 444.3 L737.8 535.6 M622.2 452.5 L731.0 543.8 M615.3 460.7 L724.1 552.0 M609.6 467.6 L718.3 558.8 M602.7 475.8 L711.4 567.0 M596.9 482.6 L705.7 573.9 M590.1 490.8 L698.8 582.1 M583.2 499.0 L691.9 590.3 M577.4 505.9 L686.2 597.1"/>
<path clip-path="url(#cpJ)" d="M573.8 401.1 L608.7 531.3 M566.4 403.1 L601.3 533.3 M559.0 405.1 L593.9 535.3 M553.2 406.6 L588.1 536.9 M545.8 408.6 L580.7 538.9 M540.0 410.1 L574.9 540.4 M532.6 412.1 L567.5 542.4 M525.2 414.1 L560.1 544.4 M519.4 415.7 L554.3 545.9 M512.0 417.6 L546.9 547.9 M506.2 419.2 L541.1 549.5 M498.8 421.2 L533.7 551.4 M491.3 423.2 L526.3 553.4 M485.6 424.7 L520.5 555.0 M478.2 426.7 L513.1 557.0 M472.4 428.2 L507.3 558.5 M465.0 430.2 L499.9 560.5 M457.5 432.2 L492.4 562.5 M451.8 433.8 L486.7 564.0 M444.4 435.8 L479.3 566.0 M438.6 437.3 L473.5 567.6 M439.4 433.1 L569.7 398.2 M441.5 440.8 L571.7 405.9 M444.0 450.1 L574.2 415.2 M446.0 457.8 L576.3 422.9 M448.5 467.2 L578.8 432.3 M451.1 476.5 L581.3 441.6 M453.1 484.2 L583.4 449.3 M455.6 493.6 L585.9 458.7 M457.7 501.3 L588.0 466.4 M460.2 510.6 L590.5 475.7 M462.7 520.0 L593.0 485.1 M464.8 527.7 L595.0 492.8 M467.3 537.1 L597.5 502.2 M469.3 544.7 L599.6 509.8 M471.8 554.1 L602.1 519.2 M474.4 563.5 L604.6 528.6 M476.4 571.2 L606.7 536.3"/>
</g>
<!-- roads minor -->
<g fill="none" stroke="#fdfdfc" stroke-linecap="round" stroke-linejoin="round" stroke-width="1">
 <path d="M324 250 L345 256 L370 266 L395 277 L420 286 L437 291"/>
 <path d="M324 268 L350 278 L372 287 L392 296"/>
 <path d="M338 256 L334 270 M378 268 L372 287 L366 302 M402 278 L398 292"/>
 <path d="M340 222 L360 228 L380 235 L400 234"/>
 <path d="M390 205 L395 215 L392 222 L402 228 L400 234 L425 238 L450 250 L462 246 L475 235 L480 226 L478 214"/>
 <path d="M413 205 L425 215 L432 226 L445 235 L458 245"/>
 <path d="M478 214 L486 208 M480 226 L492 240 L500 252"/>
 <path d="M548 278 L570 270 L600 263 L614 260"/>
 <path d="M595 204 L588 220 L578 245 L572 268 L573 290"/>
 <path d="M560 204 L580 208 L612 212 L626 216 L628 232 L622 250 L616 262"/>
 <path d="M612 212 L600 226 L594 244 M626 216 L640 222 M570 236 L600 244 L622 250"/>
 <path d="M600 270 L612 288 M560 290 L575 300 M545 285 L552 296"/>
 <path d="M650 238 L672 240 L700 241 L742 228 L770 236 L800 246 L830 256 L874 268"/>
 <path d="M700 241 L740 256 L775 274 L800 288"/>
 <path d="M742 228 L752 214 L760 204 M770 236 L776 222 M640 212 L664 210 L690 204"/>
 <path d="M800 246 L810 232 L806 214 L800 204 M830 256 L840 240 L846 226"/>
 <path d="M820 204 L836 214 L850 230 M806 214 L830 212 L852 206"/>
 <path d="M806 270 L800 288 L790 310 L782 330 M806 270 L830 276 L856 274"/>
 <path d="M800 288 L820 300 L838 318 L850 340 L848 360 L858 380 L874 390"/>
 <path d="M790 310 L800 330 L808 350 L800 372 L790 390"/>
 <path d="M874 300 L856 310 L848 326 L856 348 L874 356"/>
 <path d="M690 352 L704 342 L724 340 L744 344 L760 352 L782 350 L790 338 L788 320 L780 306"/>
 <path d="M650 372 L664 366 L680 358 L690 352 L696 364 L706 372 L700 384"/>
 <path d="M706 372 L722 366 L738 372 L748 384"/>
 <path d="M684 396 L696 410 L704 424 L700 440 L690 452 L672 462 L660 470"/>
 <path d="M704 424 L724 432 L744 436 L770 432 L792 424 L812 420 L836 422 L858 430 L874 436"/>
 <path d="M770 432 L782 446 L790 462 L786 480 L776 496"/>
 <path d="M700 440 L712 456 L716 472 L710 488 L716 504 L730 516 L740 530"/>
 <path d="M660 470 L672 482 L688 494 L704 508 L716 524 L724 541"/>
 <path d="M786 480 L806 488 L830 490 L852 498 L874 500"/>
 <path d="M744 436 L740 452 L748 468 L760 478"/>
 <path d="M812 420 L818 402 L830 390 L850 384"/>
 <path d="M326 450 L334 430 L342 416 L356 406 L372 400 L384 392 L390 384 L402 380 L420 378"/>
 <path d="M324 402 L340 410 M372 400 L392 404 L410 412 L428 420 L446 426"/>
 <path d="M342 416 L348 434 L346 452 L352 470 L366 484"/>
 <path d="M324 486 L340 492 L350 506 M324 470 L336 474"/>
 <path d="M446 426 L462 420 L480 416 L496 414"/>
 <path d="M420 378 L436 372 L448 362 L456 352 M420 378 L432 392 L440 410 L446 426"/>
 <path d="M468 374 L472 392 L470 410 L476 430 L488 446 L500 456"/>
 <path d="M446 426 L450 444 L460 462 L476 474 L490 482"/>
 <path d="M490 482 L502 470 L510 458 M490 482 L498 500 L510 514"/>
 <path d="M500 380 L490 396 L480 416"/>
 <path d="M546 464 L548 480 L552 500 L556 520 L560 541"/>
 <path d="M566 462 L568 490 L570 520 L572 541"/>
 <path d="M578 462 L578 500 L582 541"/>
 <path d="M636 476 L650 470 L660 470 M646 488 L662 480 L676 476 L690 478"/>
 <path d="M660 512 L676 504 L692 500 M672 530 L690 522 L706 520"/>
 <path d="M360 285 L395 305 L420 325 L440 345 L460 365 L472 378"/>
 <path d="M395 305 L405 300 L425 302 L452 312 L480 325 L500 334"/>
 <path d="M438 293 L434 320 L426 345 L414 372"/>
 <path d="M452 312 L444 330 L438 348 L430 366"/>
 <path d="M366 318 L380 330 L396 340 L414 346 L440 345"/>
 <path d="M440 345 L462 352 L484 362 L500 374"/>
 <path d="M396 340 L392 356 L396 372 L404 380"/>
 <path d="M440 291 L470 292 L484 300 M455 286 L470 292"/>
 <path d="M545 285 L535 305 L520 325 L510 340 L496 360 L486 374"/>
 <path d="M480 300 L500 310 L520 325 M500 296 L506 310 L500 334 L492 350"/>
 <path d="M520 325 L540 336 L556 348 L570 362 M535 305 L552 316 L566 330"/>
 <path d="M510 340 L530 350 L548 362 L560 376"/>
 <path d="M556 313 L548 330 L540 336 M566 322 L560 340 L556 348"/>
 <path d="M596 300 L600 320 L604 340 L608 360 L606 372"/>
 <path d="M612 288 L618 306 L624 330 L626 352 L624 370"/>
 <path d="M640 300 L636 320 L640 344 L650 362 L650 372"/>
 <path d="M604 340 L624 330 L640 320 M608 360 L626 352 L640 344"/>
 <path d="M575 300 L584 312 L590 326"/>
 <path d="M660 300 L650 310 L640 320"/>
</g>
<!-- roads major -->
<g fill="none" stroke="#ffffff" stroke-linecap="round" stroke-linejoin="round" stroke-width="1.700">
 <path d="M545 204 L570 230 L585 248 L600 270 L612 288"/>
 <path d="M548 278 L536 284 L524 296"/>
 <path d="M437 291 L470 292 L500 296 L524 296"/>
 <path d="M360 285 L395 305 L420 325 L440 345"/>
 <path d="M545 285 L535 305 L520 325"/>
 <path d="M650 238 L700 241 L742 228 L800 246"/>
 <path d="M548 278 L570 270 L600 263"/>
</g>
<!-- highways -->
<g fill="none" stroke-linecap="round" stroke-linejoin="round">
 <path d="M610 285 L609 298 L604 310 L596 321 L586 331" stroke="#f5d560" stroke-width="2"/>
 <path d="M617 262 L613 272 L610 285" stroke="#f5d560" stroke-width="2"/>
 <path d="M322 230 L340 237 L355 244 L368 254 L380 264 L392 273 L410 282 L430 289 L441 290.500 L458 290.500" stroke="#f5a75e" stroke-width="2.600"/>
 <path d="M640 246 L660 236 L678 225 L690 212 L702 204 M617 262 L628 252 L640 246" stroke="#f5a75e" stroke-width="2.400"/>
 <path d="M706 202 L716 206 L730 212 L745 217.500 L765 222 L785 224 L800 223 L820 219 L840 211 L856 202" stroke="#f5a75e" stroke-width="3.600"/>
 <path d="M787 227 L788 236 L791 244 M783 227 L785 240" stroke="#f5a75e" stroke-width="1.200"/>
 <path d="M322 538 L334 522 L350 509 L367 502.500 L400 508 L440 516 L480 524 L512 529 L526 532 L534 540 L538 546" stroke="#f5a75e" stroke-width="4"/>
 <path d="M537 461 L540 474 L542 488 L543 500 L538 512 L530 521 L522 527" stroke="#f5a75e" stroke-width="2.400"/>
 <path d="M537 420 L536 436 L537 450 L537 461" stroke="#e9c36e" stroke-width="2"/>
</g>

<!-- badges -->
<g font-weight="bold" font-size="4.600" text-anchor="middle" fill="#fff">
 <path d="M436.500 287.800h8.400l1.600 3-1.600 3h-8.400l-1.600-3z" fill="#e5343f"/><text x="440.700" y="292.500">1H</text>
 <path d="M612.500 261.500h8.400l1.600 3-1.600 3h-8.400l-1.600-3z" fill="#e5343f"/><text x="616.700" y="266.200">1L</text>
 <path d="M593 315.100h8.400l1.600 3-1.600 3h-8.400l-1.600-3z" fill="#e5343f"/><text x="597.200" y="319.800">1L</text>
 <path d="M363 499.500h8.400l1.600 3-1.600 3h-8.400l-1.600-3z" fill="#e5343f"/><text x="367.200" y="504.200">3</text>
 <path d="M521 522.300h8.400l1.600 3-1.600 3h-8.400l-1.600-3z" fill="#e5343f"/><text x="525.200" y="527">3</text>
 <rect x="536.500" y="480" width="9" height="6.200" rx="1" fill="#3a56c8"/><text x="541" y="484.800">4</text>
 <rect x="668" y="513.800" width="9.500" height="6.200" rx="1" fill="#3a56c8"/><text x="672.700" y="518.600">17</text>
</g>
<!-- rail icons -->
<g transform="translate(519.500 332.300)"><rect x="-3.700" y="-3.700" width="7.400" height="7.400" rx="1.700" fill="#4d80e4"/><rect x="-2.100" y="-2.300" width="4.200" height="3.700" rx=".9" fill="#e6eefc"/><rect x="-1.400" y="-.3" width="2.800" height=".7" fill="#4d80e4"/><rect x="-1.600" y="1.900" width="1" height=".8" fill="#e6eefc"/><rect x=".6" y="1.900" width="1" height=".8" fill="#e6eefc"/></g><g transform="translate(591.700 366.300)"><rect x="-3.700" y="-3.700" width="7.400" height="7.400" rx="1.700" fill="#4d80e4"/><rect x="-2.100" y="-2.300" width="4.200" height="3.700" rx=".9" fill="#e6eefc"/><rect x="-1.400" y="-.3" width="2.800" height=".7" fill="#4d80e4"/><rect x="-1.600" y="1.900" width="1" height=".8" fill="#e6eefc"/><rect x=".6" y="1.900" width="1" height=".8" fill="#e6eefc"/></g><g transform="translate(566.700 393.400)"><rect x="-3.700" y="-3.700" width="7.400" height="7.400" rx="1.700" fill="#4d80e4"/><rect x="-2.100" y="-2.300" width="4.200" height="3.700" rx=".9" fill="#e6eefc"/><rect x="-1.400" y="-.3" width="2.800" height=".7" fill="#4d80e4"/><rect x="-1.600" y="1.900" width="1" height=".8" fill="#e6eefc"/><rect x=".6" y="1.900" width="1" height=".8" fill="#e6eefc"/></g><g transform="translate(621.400 422.300)"><rect x="-3.700" y="-3.700" width="7.400" height="7.400" rx="1.700" fill="#4d80e4"/><rect x="-2.100" y="-2.300" width="4.200" height="3.700" rx=".9" fill="#e6eefc"/><rect x="-1.400" y="-.3" width="2.800" height=".7" fill="#4d80e4"/><rect x="-1.600" y="1.900" width="1" height=".8" fill="#e6eefc"/><rect x=".6" y="1.900" width="1" height=".8" fill="#e6eefc"/></g>
<g transform="translate(563.600 433.700)"><rect x="-3.700" y="-3.700" width="7.400" height="7.400" rx="1.700" fill="#4d80e4"/><rect x="-2.100" y="-2.300" width="4.200" height="3.700" rx=".9" fill="#e6eefc"/><rect x="-1.400" y="-.3" width="2.800" height=".7" fill="#4d80e4"/><rect x="-1.600" y="1.900" width="1" height=".8" fill="#e6eefc"/><rect x=".6" y="1.900" width="1" height=".8" fill="#e6eefc"/></g><g transform="translate(521.900 440.300)"><rect x="-3.700" y="-3.700" width="7.400" height="7.400" rx="1.700" fill="#4d80e4"/><rect x="-2.100" y="-2.300" width="4.200" height="3.700" rx=".9" fill="#e6eefc"/><rect x="-1.400" y="-.3" width="2.800" height=".7" fill="#4d80e4"/><rect x="-1.600" y="1.900" width="1" height=".8" fill="#e6eefc"/><rect x=".6" y="1.900" width="1" height=".8" fill="#e6eefc"/></g><g transform="translate(534.700 441)"><rect x="-3.700" y="-3.700" width="7.400" height="7.400" rx="1.700" fill="#4d80e4"/><rect x="-2.100" y="-2.300" width="4.200" height="3.700" rx=".9" fill="#e6eefc"/><rect x="-1.400" y="-.3" width="2.800" height=".7" fill="#4d80e4"/><rect x="-1.600" y="1.900" width="1" height=".8" fill="#e6eefc"/><rect x=".6" y="1.900" width="1" height=".8" fill="#e6eefc"/></g><g transform="translate(447.300 430.200)"><rect x="-3.700" y="-3.700" width="7.400" height="7.400" rx="1.700" fill="#4d80e4"/><rect x="-2.100" y="-2.300" width="4.200" height="3.700" rx=".9" fill="#e6eefc"/><rect x="-1.400" y="-.3" width="2.800" height=".7" fill="#4d80e4"/><rect x="-1.600" y="1.900" width="1" height=".8" fill="#e6eefc"/><rect x=".6" y="1.900" width="1" height=".8" fill="#e6eefc"/></g>
<g transform="translate(388 452.800)"><rect x="-3.700" y="-3.700" width="7.400" height="7.400" rx="1.700" fill="#4d80e4"/><rect x="-2.100" y="-2.300" width="4.200" height="3.700" rx=".9" fill="#e6eefc"/><rect x="-1.400" y="-.3" width="2.800" height=".7" fill="#4d80e4"/><rect x="-1.600" y="1.900" width="1" height=".8" fill="#e6eefc"/><rect x=".6" y="1.900" width="1" height=".8" fill="#e6eefc"/></g><g transform="translate(420.600 493.400)"><rect x="-3.700" y="-3.700" width="7.400" height="7.400" rx="1.700" fill="#4d80e4"/><rect x="-2.100" y="-2.300" width="4.200" height="3.700" rx=".9" fill="#e6eefc"/><rect x="-1.400" y="-.3" width="2.800" height=".7" fill="#4d80e4"/><rect x="-1.600" y="1.900" width="1" height=".8" fill="#e6eefc"/><rect x=".6" y="1.900" width="1" height=".8" fill="#e6eefc"/></g><g transform="translate(534 463.500)"><rect x="-3.700" y="-3.700" width="7.400" height="7.400" rx="1.700" fill="#4d80e4"/><rect x="-2.100" y="-2.300" width="4.200" height="3.700" rx=".9" fill="#e6eefc"/><rect x="-1.400" y="-.3" width="2.800" height=".7" fill="#4d80e4"/><rect x="-1.600" y="1.900" width="1" height=".8" fill="#e6eefc"/><rect x=".6" y="1.900" width="1" height=".8" fill="#e6eefc"/></g><g transform="translate(548.700 495)"><rect x="-3.700" y="-3.700" width="7.400" height="7.400" rx="1.700" fill="#4d80e4"/><rect x="-2.100" y="-2.300" width="4.200" height="3.700" rx=".9" fill="#e6eefc"/><rect x="-1.400" y="-.3" width="2.800" height=".7" fill="#4d80e4"/><rect x="-1.600" y="1.900" width="1" height=".8" fill="#e6eefc"/><rect x=".6" y="1.900" width="1" height=".8" fill="#e6eefc"/></g>
<g transform="translate(663.400 501.900)"><rect x="-3.700" y="-3.700" width="7.400" height="7.400" rx="1.700" fill="#4d80e4"/><rect x="-2.100" y="-2.300" width="4.200" height="3.700" rx=".9" fill="#e6eefc"/><rect x="-1.400" y="-.3" width="2.800" height=".7" fill="#4d80e4"/><rect x="-1.600" y="1.900" width="1" height=".8" fill="#e6eefc"/><rect x=".6" y="1.900" width="1" height=".8" fill="#e6eefc"/></g><g transform="translate(868 260)"><rect x="-3.700" y="-3.700" width="7.400" height="7.400" rx="1.700" fill="#4d80e4"/><rect x="-2.100" y="-2.300" width="4.200" height="3.700" rx=".9" fill="#e6eefc"/><rect x="-1.400" y="-.3" width="2.800" height=".7" fill="#4d80e4"/><rect x="-1.600" y="1.900" width="1" height=".8" fill="#e6eefc"/><rect x=".6" y="1.900" width="1" height=".8" fill="#e6eefc"/></g>
<!-- district labels -->
<g font-size="6" fill="#8790b6" stroke="#efedea" stroke-width=".6" paint-order="stroke">
 <text x="591.0" y="212.1" textLength="36.0" lengthAdjust="spacing">OERLIKON</text>
 <text x="665.8" y="238.4" textLength="69.2" lengthAdjust="spacing">SCHWAMENDINGEN</text>
 <text x="731.4" y="252.1" textLength="38.3" lengthAdjust="spacing">HIRZENBACH</text>
 <text x="780.0" y="280.7" textLength="36.0" lengthAdjust="spacing">SONNENTAL</text>
 <text x="821.0" y="302.4" textLength="23.4" lengthAdjust="spacing">HÖGLER</text>
 <text x="442.6" y="254.4" textLength="25.0" lengthAdjust="spacing">HÖNGG</text>
 <text x="394.0" y="323.8" textLength="45.5" lengthAdjust="spacing">ALTSTETTEN</text>
 <text x="566.7" y="303.8" textLength="51.6" lengthAdjust="spacing">UNTERSTRASS</text>
 <text x="509.7" y="366.0" textLength="44.5" lengthAdjust="spacing">AUSSERSIHL</text>
 <text x="388.4" y="384.6" textLength="48.0" lengthAdjust="spacing">ALBISRIEDEN</text>
 <text x="480.0" y="426.4" textLength="35.6" lengthAdjust="spacing">WIEDIKON</text>
 <text x="623.0" y="409.4" textLength="41.0" lengthAdjust="spacing">HOTTINGEN</text>
 <text x="548.0" y="447.9" textLength="18.0" lengthAdjust="spacing">ENGE</text>
 <text x="444.0" y="481.1" textLength="41.0" lengthAdjust="spacing">FRIESENBERG</text>
 <text x="641.5" y="468.6" textLength="36.0" lengthAdjust="spacing">RIESBACH</text>
 <text x="744.7" y="464.9" textLength="30.3" lengthAdjust="spacing">WITIKON</text>
 <text x="537.8" y="542.1" textLength="51.2" lengthAdjust="spacing">WOLLISHOFEN</text>
 <text x="762.5" y="526.1" textLength="49.5" lengthAdjust="spacing">ZOLLIKERBERG</text>
 <text x="864" y="302.500" letter-spacing="1.100">SUNN</text>
 <text x="869.600" y="525.600" letter-spacing="1.100" fill="#a9aec6">GO</text>
</g>
<!-- POIs -->
<g font-size="6.300" text-anchor="middle" stroke="#efedea" stroke-width=".7" paint-order="stroke">
 <circle cx="488.600" cy="218.700" r="3.400" fill="none" stroke="#c48a52" stroke-width="1.300"/><rect x="487" y="217.600" width="3.600" height="2.200" fill="#c48a52" stroke="none"/>
 <text x="473.8" y="230.5" fill="#c48a52" text-anchor="start" textLength="31.6" lengthAdjust="spacingAndGlyphs">ETH Zürich</text>
 <circle cx="531.500" cy="238" r="4" fill="#35ad35" stroke="none"/><path d="M529 237.500a2.500 2 0 0 1 5 0zM531 237.500h1v2.800h-1z" fill="#fff" stroke="none"/>
 <text x="515.3" y="249.6" fill="#3c9d3c" text-anchor="start" textLength="32.7" lengthAdjust="spacingAndGlyphs">Chäferberg</text>
 <circle cx="529.700" cy="268" r="3.900" fill="#ea6c76" stroke="none"/><path d="M527.600 267.400h4.200v1.200h-4.200zM529.100 265.900h1.200v4.200h-1.200z" fill="#fff" stroke="none"/>
 <text x="506.5" y="279.0" fill="#e5606b" text-anchor="start" textLength="46.3" lengthAdjust="spacingAndGlyphs">Stadtspital Waid</text>
 <circle cx="474.400" cy="343.600" r="3.900" fill="#e86fc4" stroke="none"/><circle cx="474.400" cy="343.900" r="1.500" fill="#fbe0f3" stroke="none"/>
 <text x="447.5" y="355.5" fill="#e662bd" text-anchor="start" textLength="54.4" lengthAdjust="spacingAndGlyphs">Stadion Letzigrund</text>
 <circle cx="711.600" cy="323.700" r="3.900" fill="#e86fc4" stroke="none"/><rect x="709.500" y="322.500" width="4" height="2.300" rx=".8" fill="#fbe0f3" stroke="none"/>
 <text x="697.0" y="336.1" fill="#e662bd" text-anchor="start" textLength="29.7" lengthAdjust="spacingAndGlyphs">Zoo Zürich</text>
 <circle cx="731.400" cy="348.600" r="4" fill="#35ad35" stroke="none"/><path d="M728.900 348.100a2.500 2 0 0 1 5 0zM730.900 348.100h1v2.800h-1z" fill="#fff" stroke="none"/>
 <text x="716.0" y="360.2" fill="#3c9d3c" text-anchor="start" textLength="31.5" lengthAdjust="spacingAndGlyphs">Zürichberg</text>
 <circle cx="703" cy="391.900" r="3.700" fill="#fff" stroke="#8f6fe6" stroke-width="1.300"/><rect x="701.200" y="390.700" width="3.600" height="2.400" rx=".6" fill="#8f6fe6" stroke="none"/>
 <text x="678.8" y="403.6" fill="#8468dd" text-anchor="start" textLength="50.0" lengthAdjust="spacingAndGlyphs">The Dolder Grand</text>
 <path d="M760.400 404.200l3-4.400 3 4.400z" fill="#6f8fb0" stroke="none"/>
 <text x="750.0" y="414.0" fill="#6a8aac" text-anchor="start" textLength="28.0" lengthAdjust="spacingAndGlyphs">Adlisberg</text>
</g>
<!-- place labels -->
<g fill="#1f1f1f" stroke="#f2f1ee" stroke-width=".9" paint-order="stroke">
 <text x="324.200" y="218.700" font-size="8.200" fill="#161616" stroke="#161616" stroke-width=".380">rengstringen</text>
 <text x="833" y="277.900" font-size="8.400" fill="#161616" stroke="#161616" stroke-width=".380">Dubendorf</text>
 <text x="848.400" y="428" font-size="6.800">Pfaffhausen</text>
 <text x="871.500" y="470" font-size="6.800">E</text>
 <text x="580.800" y="388" font-size="11.600" fill="#141414" stroke="#141414" stroke-width=".400" textLength="33.200" lengthAdjust="spacingAndGlyphs">Zurich</text>
 <g font-size="5.300" fill="#4a4a4a" stroke-width=".6">
  <text transform="translate(350.500 230.300) rotate(22)">Kirchweg</text>
  <text transform="translate(437 351.500) rotate(-57)">Flurstrasse</text>
  <text transform="translate(419 513.800) rotate(12.500)" textLength="44" lengthAdjust="spacingAndGlyphs" font-size="5.600">Uetlibergtunnel</text>
  <text transform="translate(571.900 484) rotate(90)" textLength="31" lengthAdjust="spacingAndGlyphs" font-size="5.600">Mythenquai</text>
 </g>
</g>
<!-- geofence polygon -->
<path d="M509 344.400 L682.200 366.900 L660.300 461.600 L501.500 461.600z" fill="#38e0b4" fill-opacity=".385" stroke="#33d1a6" stroke-width="1.800" stroke-linejoin="round"/>
<circle cx="509" cy="344.400" r="3.800" fill="#fff" stroke="#2fcfa3" stroke-width="1.700"/>
<circle cx="660.300" cy="461.600" r="3.800" fill="#fff" stroke="#2fcfa3" stroke-width="1.700"/>
</svg>

  <div class="ctl" style="top:6.300px;height:48.700px">
   <svg width="16" height="48.700" viewBox="0 0 32 97.400" style="position:absolute;left:0;top:0">
    <path d="M10 16.200h12M16 10.200v12" stroke="#222" stroke-width="3.200" fill="none"/>
    <path d="M10 48.700h12" stroke="#222" stroke-width="3.200" fill="none"/>
    <path d="M0 32.500h32M0 65h32" stroke="#ddd" stroke-width="1.400"/>
    <path d="M16 71l4.200 9.500h-8.400z" fill="#333"/><path d="M16 91l4.200-9.500h-8.400z" fill="#c6c6c6"/>
   </svg>
  </div>
  <div class="ctl" style="top:61.600px;height:29.700px">
   <div style="position:absolute;left:-.5px;top:0;width:16.500px;height:15.500px;background:#2fcfa5;border-radius:2.500px 2.500px 0 0"></div>
   <svg width="16" height="29.700" viewBox="0 0 32 59.400" style="position:absolute;left:0;top:0">
    <rect x="10.500" y="10" width="11" height="11" fill="none" stroke="#1c2b28" stroke-width="2.200"/>
    <rect x="8.300" y="7.800" width="4.400" height="4.400" fill="#1c2b28"/><rect x="19.300" y="7.800" width="4.400" height="4.400" fill="#1c2b28"/><rect x="8.300" y="18.800" width="4.400" height="4.400" fill="#1c2b28"/><rect x="19.300" y="18.800" width="4.400" height="4.400" fill="#1c2b28"/>
    <path d="M10 39.500h12v2h-12zM13.500 37.600h5v2h-5zM11 43h10l-.9 10.500h-8.200z" fill="#222"/>
   </svg>
  </div>
  <div style="position:absolute;left:538.200px;top:309.300px;width:6.600px;height:12.600px;border-right:1.300px solid #1e1e20;border-bottom:1.300px solid #1e1e20;border-radius:0 0 1.500px 0"></div>
  <div class="tip">Polygon zurücksetzen</div>
  <div class="attr">© Mapbox © OpenStreetMap <b>Improve this map</b></div>
 </div>
</div>

</div>
</body>
</html>
